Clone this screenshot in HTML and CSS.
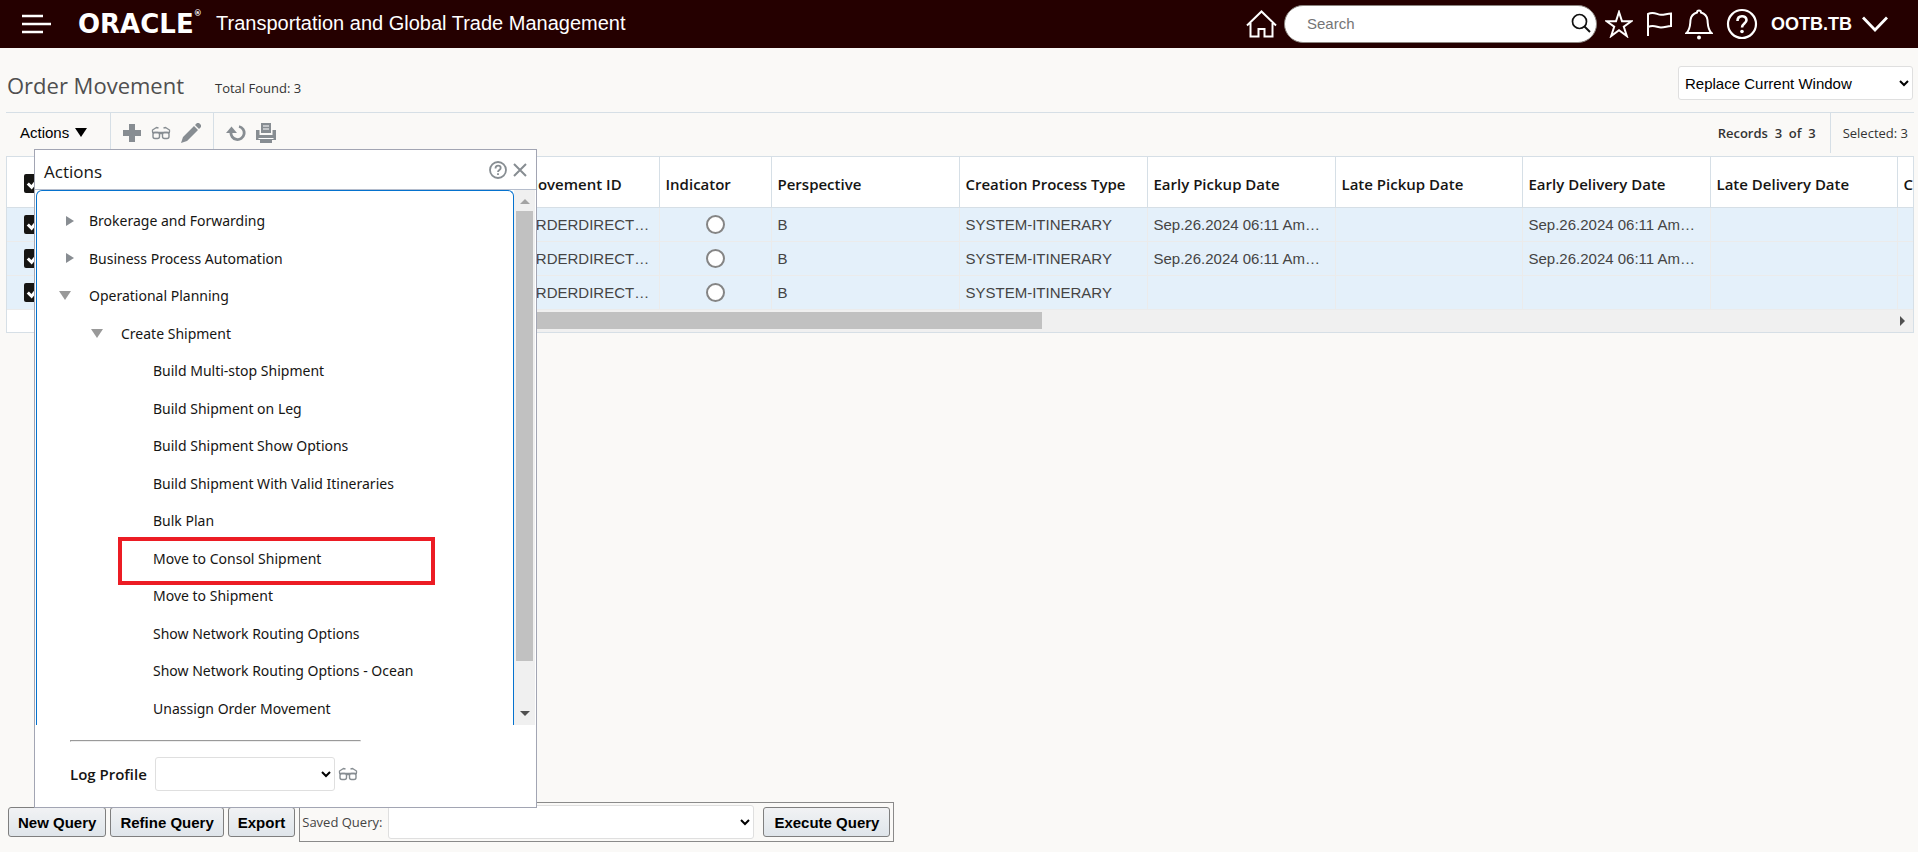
FILE: index.html
```html
<!DOCTYPE html>
<html lang="en">
<head>
    <meta charset="UTF-8">
    <meta name="viewport" content="width=device-width, initial-scale=1.0">
    <title>Order Movement</title>
    <link rel="stylesheet" href="styles.css">
</head>
<body>
    <svg class="symbols" aria-hidden="true">
        <symbol id="glasses" viewBox="0 0 20 14">
            <path d="M1 6.500h18M1.500 6V4l4-2.500 2 .5M18.500 6V4l-4-2.500-2 .5M8.500 7.500h3" fill="none" stroke="currentColor" stroke-width="1.300"/>
            <rect x="2" y="6.500" width="6.500" height="6" rx="2" fill="none" stroke="currentColor" stroke-width="1.400"/>
            <rect x="11.500" y="6.500" width="6.500" height="6" rx="2" fill="none" stroke="currentColor" stroke-width="1.400"/>
        </symbol>
    </svg>

    <header class="header">
        <button class="icon-btn menu" aria-label="Menu">
            <svg width="30" height="20" viewBox="0 0 30 20"><path d="M0 2h21M0 10h29M0 18h21" stroke="#fff" stroke-width="2.400"/></svg>
        </button>
        <span class="logo">ORACLE<sup>&reg;</sup></span>
        <span class="product">Transportation and Global Trade Management</span>
        <div class="header-right">
            <button class="icon-btn" aria-label="Home">
                <svg width="31" height="28" viewBox="0 0 31 28"><path d="M1 15.500L15.500 1.500l14.500 14M4.500 13v13.500h8V19h6v7.500h8V13" fill="none" stroke="#fff" stroke-width="2"/></svg>
            </button>
            <label class="search">
                <input type="text" placeholder="Search" aria-label="Search">
                <svg width="20" height="20" viewBox="0 0 20 20"><circle cx="8.500" cy="8.500" r="7" fill="none" stroke="#111" stroke-width="1.700"/><path d="M13.500 13.500l5.500 5.500" stroke="#111" stroke-width="2"/></svg>
            </label>
            <button class="icon-btn star" aria-label="Favorites">
                <svg width="28" height="28" viewBox="0 0 28 28"><path d="M14 2l3 9.200h9.500l-7.700 5.500 3 9.300-7.800-5.800L6.200 26l3-9.300-7.700-5.500H11z" fill="none" stroke="#fff" stroke-width="2"/></svg>
            </button>
            <button class="icon-btn" aria-label="Flag">
                <svg width="26" height="26" viewBox="0 0 26 26"><path d="M2 25V3c6-3 9 .8 13 .8 4 0 6-1.300 10-1.300V15c-4 .2-6 1.500-10 1.500s-7-3-13-.5" fill="none" stroke="#fff" stroke-width="2"/></svg>
            </button>
            <button class="icon-btn" aria-label="Notifications">
                <svg width="28" height="32" viewBox="0 0 28 32"><path d="M1.500 25c4-4 3.500-8 4-13 .5-4 3-6.500 6.500-7.500a2 2 0 1 1 4 0c3.500 1 6 3.500 6.500 7.500.5 5 0 9 4 13z" fill="none" stroke="#fff" stroke-width="2"/><circle cx="14" cy="29.500" r="2" fill="#fff"/></svg>
            </button>
            <button class="icon-btn" aria-label="Help">
                <svg width="32" height="32" viewBox="0 0 32 32"><circle cx="16" cy="16" r="14" fill="none" stroke="#fff" stroke-width="2.200"/><path d="M11.500 13c0-6.500 9-6 9-1 0 3.500-4.500 3.500-4.500 7.500" fill="none" stroke="#fff" stroke-width="2.600"/><circle cx="16" cy="23.500" r="1.800" fill="#fff"/></svg>
            </button>
            <button class="icon-btn user">OOTB.TB
                <svg width="26" height="16" viewBox="0 0 26 16"><path d="M1 1.500l12 12.500L25 1.500" fill="none" stroke="#fff" stroke-width="2.800"/></svg>
            </button>
        </div>
    </header>

    <main class="page">
        <div class="title-row">
            <h1>Order Movement</h1>
            <span class="found"><b>Total Found:</b> 3</span>
            <select class="field window-select" aria-label="Window">
                <option>Replace Current Window</option>
            </select>
        </div>

        <div class="toolbar">
            <button class="actions-btn">Actions <span class="caret"></span></button>
            <div class="tool-group">
                <button class="tool" aria-label="Add"><svg width="18" height="18" viewBox="0 0 18 18"><path d="M9 0v18M0 9h18" stroke="currentColor" stroke-width="6"/></svg></button>
                <button class="tool" aria-label="View"><svg width="20" height="14"><use href="#glasses"/></svg></button>
                <button class="tool" aria-label="Edit"><svg width="20" height="20" viewBox="0 0 20 20"><path d="M0 20l2-6L13 3l4 4L6 18zM14 2l2-2h2l2 2v2l-2 2z" fill="currentColor"/></svg></button>
            </div>
            <div class="tool-group">
                <button class="tool" aria-label="Refresh"><svg width="20" height="18" viewBox="0 0 20 18"><path d="M13 2.500a6.600 6.600 0 1 1-8 5.500" fill="none" stroke="currentColor" stroke-width="2.800"/><path d="M5.500 2.500L11 9H0z" fill="currentColor"/></svg></button>
                <button class="tool" aria-label="Print"><svg width="20" height="20" viewBox="0 0 20 20"><path d="M5 0h10v10H5z" fill="currentColor"/><path d="M7 3h6M7 6h6" stroke="#fff" stroke-width="1.200"/><path d="M0 7h3.500v5h13V7H20v10H0z" fill="currentColor"/><path d="M2.500 15.500h15" stroke="#fff"/><path d="M4 17h12v3H4z" fill="currentColor"/></svg></button>
            </div>
            <div class="counts">
                <b class="records">Records&nbsp; 3&nbsp; of&nbsp; 3</b>
                <span class="selected"><span>Selected:</span> 3</span>
            </div>
        </div>

        <div class="grid">
            <table>
                <colgroup>
                    <col class="c-check"><col class="c-hidden"><col class="c-id"><col class="c-ind">
                    <col class="c-id"><col class="c-id"><col class="c-id"><col class="c-date"><col class="c-id"><col class="c-date"><col class="c-date">
                </colgroup>
                <thead>
                    <tr>
                        <th><input type="checkbox" checked aria-label="Select all"></th>
                        <th></th>
                        <th>Order Movement ID</th>
                        <th>Indicator</th>
                        <th>Perspective</th>
                        <th>Creation Process Type</th>
                        <th>Early Pickup Date</th>
                        <th>Late Pickup Date</th>
                        <th>Early Delivery Date</th>
                        <th>Late Delivery Date</th>
                        <th>C</th>
                    </tr>
                </thead>
                <tbody>
                    <tr>
                        <td><input type="checkbox" checked aria-label="Select row 1"></td><td></td>
                        <td>OOTB.ORDERDIRECT…</td><td><span class="dot"></span></td><td>B</td><td>SYSTEM-ITINERARY</td>
                        <td>Sep.26.2024 06:11 Am…</td><td></td><td>Sep.26.2024 06:11 Am…</td><td></td><td></td>
                    </tr>
                    <tr>
                        <td><input type="checkbox" checked aria-label="Select row 2"></td><td></td>
                        <td>OOTB.ORDERDIRECT…</td><td><span class="dot"></span></td><td>B</td><td>SYSTEM-ITINERARY</td>
                        <td>Sep.26.2024 06:11 Am…</td><td></td><td>Sep.26.2024 06:11 Am…</td><td></td><td></td>
                    </tr>
                    <tr>
                        <td><input type="checkbox" checked aria-label="Select row 3"></td><td></td>
                        <td>OOTB.ORDERDIRECT…</td><td><span class="dot"></span></td><td>B</td><td>SYSTEM-ITINERARY</td>
                        <td></td><td></td><td></td><td></td><td></td>
                    </tr>
                </tbody>
            </table>
            <div class="hscroll">
                <div class="hthumb"></div>
                <span class="arrow-right dark"></span>
            </div>
        </div>
    </main>

    <footer class="query-bar">
        <button class="btn">New Query</button>
        <button class="btn">Refine Query</button>
        <button class="btn">Export</button>
        <div class="saved">
            <label for="saved-query">Saved Query:</label>
            <select class="field" id="saved-query"><option></option></select>
            <button class="btn">Execute Query</button>
        </div>
    </footer>

    <div class="popup" role="dialog" aria-label="Actions">
        <div class="popup-head">
            <h2>Actions</h2>
            <button class="tool" aria-label="Help"><svg width="18" height="18" viewBox="0 0 18 18"><circle cx="9" cy="9" r="8" fill="none" stroke="currentColor" stroke-width="1.800"/><path d="M6.500 7.500c0-4 5.200-3.500 5.200-.5C11.700 9 9 9 9 11" fill="none" stroke="currentColor" stroke-width="1.800"/><path d="M9 12.200V14" stroke="currentColor" stroke-width="1.800"/></svg></button>
            <button class="tool" aria-label="Close"><svg width="14" height="14" viewBox="0 0 14 14"><path d="M1 1l12 12M13 1L1 13" stroke="currentColor" stroke-width="2"/></svg></button>
        </div>
        <div class="popup-body">
            <ul class="tree">
                <li><span class="arrow-right"></span><a href="#">Brokerage and Forwarding</a></li>
                <li><span class="arrow-right"></span><a href="#">Business Process Automation</a></li>
                <li><span class="arrow-down"></span><a href="#">Operational Planning</a></li>
                <li class="level2"><span class="arrow-down"></span><a href="#">Create Shipment</a></li>
                <li class="level3"><a href="#">Build Multi-stop Shipment</a></li>
                <li class="level3"><a href="#">Build Shipment on Leg</a></li>
                <li class="level3"><a href="#">Build Shipment Show Options</a></li>
                <li class="level3"><a href="#">Build Shipment With Valid Itineraries</a></li>
                <li class="level3"><a href="#">Bulk Plan</a></li>
                <li class="level3 marked"><a href="#">Move to Consol Shipment</a></li>
                <li class="level3"><a href="#">Move to Shipment</a></li>
                <li class="level3"><a href="#">Show Network Routing Options</a></li>
                <li class="level3"><a href="#">Show Network Routing Options - Ocean</a></li>
                <li class="level3"><a href="#">Unassign Order Movement</a></li>
            </ul>
            <div class="vscroll">
                <span class="arrow-up"></span>
                <div class="vthumb"></div>
                <span class="arrow-down dark"></span>
            </div>
        </div>
        <div class="popup-foot">
            <hr>
            <div class="log-row">
                <label for="log-profile">Log Profile</label>
                <select class="field" id="log-profile"><option></option></select>
                <button class="tool" aria-label="View profile"><svg width="20" height="14"><use href="#glasses"/></svg></button>
            </div>
        </div>
    </div>
</body>
</html>
```
FILE: styles.css
```css
* {
    box-sizing: border-box;
}
body {
    margin: 0;
    min-height: 100vh;
    display: flex;
    flex-direction: column;
    background-color: #faf9f7;
    font-family: "Open Sans", "Noto Sans", sans-serif;
    font-size: 14px;
    color: #161513;
    overflow: hidden;
}
button {
    padding: 0;
    border: 0;
    background: none;
    font: inherit;
    color: inherit;
    cursor: pointer;
}
svg {
    display: block;
}
.symbols {
    position: absolute;
    width: 0;
    height: 0;
}

/* header */
.header {
    display: flex;
    align-items: center;
    height: 48px;
    padding: 0 30px 0 22px;
    background-color: #250000;
    color: #fff;
    font-family: "Liberation Sans", Arial, sans-serif;
}
.menu {
    margin-right: 26px;
}
.logo {
    width: 138px;
    font-family: "DejaVu Sans", sans-serif;
    font-size: 26px;
    font-weight: bold;
    white-space: nowrap;
}
.logo sup {
    font-size: 8px;
    vertical-align: top;
}
.product {
    padding-bottom: 2px;
    font-size: 20px;
}
.header-right {
    display: flex;
    align-items: center;
    margin-left: auto;
    gap: 13px;
}
.search {
    display: flex;
    align-items: center;
    width: 313px;
    height: 38px;
    margin: 0 -5px 0 -6px;
    padding: 0 5px 2px 22px;
    border: 1px solid #8b8580;
    border-radius: 19px;
    background-color: #fff;
}
.search input {
    flex: 1;
    min-width: 0;
    padding: 0;
    border: 0;
    outline: 0;
    font: 15px "Liberation Sans", Arial, sans-serif;
}
.user {
    display: flex;
    align-items: center;
    gap: 10px;
    font-size: 18px;
    font-weight: bold;
}

/* page */
.page {
    flex: 1;
    padding: 18px 4px 0 6px;
}
.title-row {
    display: flex;
    align-items: center;
    height: 34px;
    margin: 0 1px 12px;
}
h1 {
    margin: 0;
    padding-top: 3px;
    width: 208px;
    font-size: 22px;
    font-weight: normal;
    color: #4f4f4f;
}
.found {
    padding-top: 10px;
    font-size: 13px;
    color: #333;
}
.found b {
    font-weight: 500;
}
.field {
    height: 34px;
    border: 1px solid #dfdfdf;
    border-radius: 3px;
    background-color: #fff;
    color: #000;
    font: 15px "Liberation Sans", Arial, sans-serif;
}
.window-select {
    width: 235px;
    margin-left: auto;
    padding-left: 2px;
}
.toolbar {
    display: flex;
    height: 44px;
    border-top: 1px solid #d6dfe6;
}
.actions-btn {
    display: flex;
    align-items: center;
    gap: 6px;
    width: 104px;
    padding: 0 0 4px 14px;
    font: 15px "Liberation Sans", Arial, sans-serif;
    color: #000;
}
.caret {
    border: 6px solid transparent;
    border-top: 9px solid #000;
    border-bottom: 0;
}
.tool-group {
    display: flex;
    align-items: center;
    gap: 10px;
    padding: 0 12px 4px;
    border-left: 1px solid #d6dfe6;
}
.tool {
    color: #878d92;
}
.counts {
    display: flex;
    margin-left: auto;
    font-size: 13px;
    line-height: 40px;
    color: #333;
}
.records {
    padding-right: 14px;
    font-weight: 600;
}
.selected {
    height: 40px;
    padding: 0 6px 0 12px;
    border-left: 1px solid #d6dfe6;
}

/* grid */
.grid {
    overflow: hidden;
    border: 1px solid #d6dfe6;
    background-color: #fff;
}
table {
    width: 100%;
    table-layout: fixed;
    border-collapse: collapse;
}
.c-check {
    width: 60px;
}
.c-hidden {
    width: 404px;
}
.c-id {
    width: 188px;
}
.c-date {
    width: 187px;
}
.c-ind {
    width: 112px;
}
th, td {
    padding: 0 0 0 6px;
    overflow: hidden;
    text-align: left;
    white-space: nowrap;
}
th {
    height: 50px;
    padding-top: 4px;
    border-right: 1px solid #d6dfe6;
    border-bottom: 1px solid #d6dfe6;
    font-size: 15px;
    font-weight: 600;
}
td {
    height: 34px;
    border-right: 1px solid #ebebeb;
    border-bottom: 1px solid #ebebeb;
    background-color: #e4f0fa;
    font-family: "Liberation Sans", Arial, sans-serif;
    font-size: 15px;
    color: #444;
}
tr > :first-child {
    padding-left: 17px;
}
input[type="checkbox"] {
    display: block;
    width: 19px;
    height: 19px;
    margin: 0;
    accent-color: #161513;
}
td:nth-child(4) {
    padding-right: 6px;
}
.dot {
    display: block;
    width: 19px;
    height: 19px;
    margin: 0 auto;
    border: 2px solid #858585;
    border-radius: 50%;
    background-color: #fff;
}
.hscroll {
    display: flex;
    align-items: center;
    height: 22px;
    margin-left: 60px;
    padding-right: 8px;
    background-color: #f0f0f0;
}
.hthumb {
    width: 975px;
    height: 17px;
    margin-right: auto;
    background-color: #c1c1c1;
}
.arrow-right {
    border: 5px solid transparent;
    border-left: 8px solid #888d92;
    border-right: 0;
}
.arrow-down {
    border: 6px solid transparent;
    border-top: 9px solid #999;
    border-bottom: 0;
}
.arrow-up {
    border: 5px solid transparent;
    border-bottom: 5px solid #a3a3a3;
    border-top: 0;
}
.arrow-right.dark {
    border-left: 5px solid #505050;
}
.arrow-down.dark {
    border-width: 5px 5px 0;
    border-top-color: #505050;
}

/* query bar */
.query-bar {
    display: flex;
    align-items: center;
    gap: 4px;
    height: 40px;
    margin: 0 0 10px 8px;
}
.btn {
    height: 30px;
    padding: 0 10px;
    border: 1px solid #7f7f7f;
    border-radius: 3px;
    background: linear-gradient(#f1f2f4, #dfe5ea);
    font: bold 15px "Liberation Sans", Arial, sans-serif;
    color: #000;
}
.query-bar > .btn {
    padding: 0 9px;
}
.saved {
    display: flex;
    align-items: center;
    height: 40px;
    padding: 0 3px 0 2px;
    border: 1px solid #8a8a8a;
    font-size: 13px;
    color: #444;
}
.saved .field {
    width: 366px;
    margin: 0 9px 0 6px;
}

/* actions popup */
.popup {
    position: absolute;
    left: 34px;
    top: 149px;
    width: 503px;
    border: 1px solid #a2a5b3;
    background-color: #fff;
}
.popup-head {
    display: flex;
    align-items: center;
    gap: 6px;
    height: 40px;
    padding: 0 9px;
    border-bottom: 1px solid #b5bdcc;
}
h2 {
    margin: 0 auto 0 0;
    padding-top: 4px;
    font-size: 17px;
    font-weight: 500;
}
.popup-body {
    display: flex;
    height: 535px;
    padding: 0 1px;
}
.tree {
    flex: 1;
    margin: 0;
    padding: 11px 0 0;
    border: 1px solid #0572ce;
    border-bottom: 0;
    border-radius: 6px 6px 0 0;
    font-family: "Noto Sans", sans-serif;
    list-style: none;
    overflow: hidden;
}
.tree li {
    display: flex;
    align-items: center;
    position: relative;
    height: 37px;
    padding-left: 52px;
}
.tree li:nth-child(even) {
    height: 38px;
}
.tree .level2 {
    padding-left: 84px;
}
.tree .level3 {
    padding-left: 116px;
}
.tree a {
    color: inherit;
    text-decoration: none;
}
.tree .arrow-right {
    margin: 0 15px 0 -23px;
}
.tree .arrow-down {
    margin: 0 18px 0 -30px;
}
/* highlight frame around one entry */
.marked::after {
    content: "";
    box-sizing: border-box;
    position: absolute;
    left: 81px;
    top: -2px;
    width: 317px;
    height: 48px;
    border: 4px solid #ec1c24;
}
.vscroll {
    display: flex;
    flex-direction: column;
    align-items: center;
    width: 21px;
    padding: 9px 0;
    background-color: #f0f0f0;
}
.vthumb {
    width: 17px;
    height: 450px;
    margin: 7px 0 auto;
    background-color: #c1c1c1;
}
.popup-foot {
    padding: 15px 35px 16px;
}
hr {
    width: 291px;
    margin: 0;
}
.log-row {
    display: flex;
    align-items: center;
    margin-top: 15px;
}
.log-row label {
    width: 79px;
    font-size: 15px;
    font-weight: 600;
    white-space: nowrap;
}
.log-row .field {
    width: 180px;
    margin: 0 3px 0 6px;
}
```
